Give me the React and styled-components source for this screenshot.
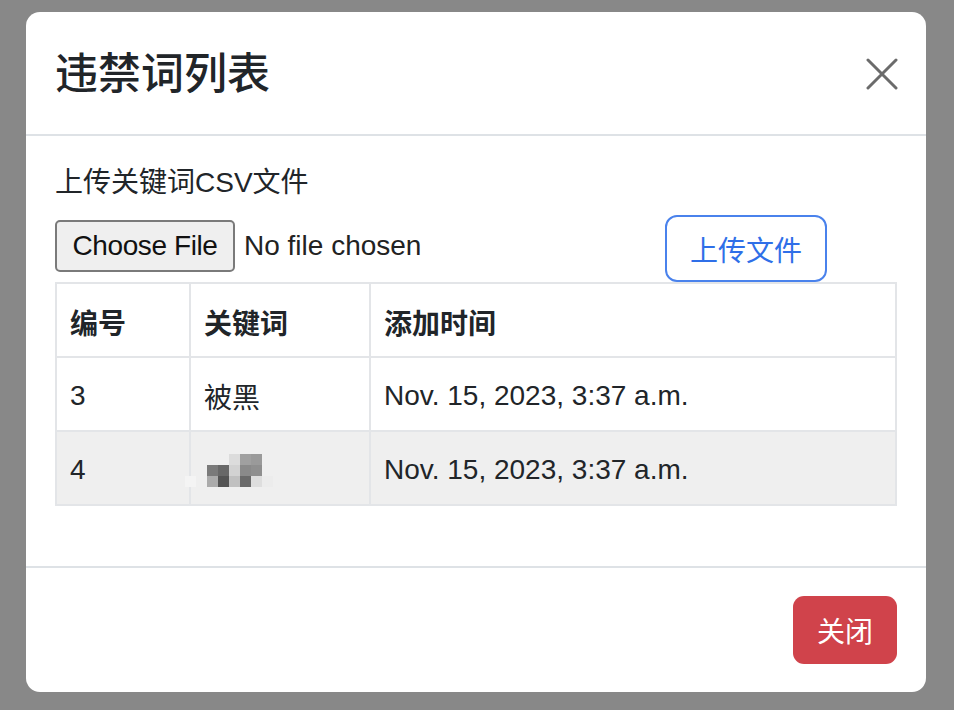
import React from "react";
import styled, { createGlobalStyle } from "styled-components";

const Global = createGlobalStyle`
  html, body { margin: 0; padding: 0; background: #888888; }
  body { font-family: "Liberation Sans", "Noto Sans CJK SC", Arial, sans-serif; color: #212529; }
  * { box-sizing: border-box; }
`;

const Page = styled.div`
  width: 954px;
  height: 710px;
  padding: 12px 28px 18px 26px;
`;

const Modal = styled.div`
  width: 900px;
  height: 680px;
  background: #fff;
  border-radius: 14px;
  display: flex;
  flex-direction: column;
  overflow: hidden;
`;

const Header = styled.div`
  height: 124px;
  flex: none;
  display: flex;
  align-items: center;
  justify-content: space-between;
  padding: 2px 28px 0 29px;
  border-bottom: 2px solid #dee2e6;
`;

const Title = styled.h5`
  margin: 0;
  font-size: 43px;
  font-weight: 500;
  line-height: 50px;
  color: #212529;
`;

const CloseX = styled.button`
  width: 32px;
  height: 32px;
  padding: 0;
  border: none;
  background: transparent;
  display: flex;
  align-items: center;
  justify-content: center;
`;

const Body = styled.div`
  flex: 1;
  padding: 32px 29px 30px 29px;
  display: flex;
  flex-direction: column;
`;

const Label = styled.div`
  font-size: 28px;
  line-height: 30px;
  color: #212529;
`;

const UploadRow = styled.div`
  display: flex;
  align-items: center;
  height: 67px;
  margin-top: 17px;
`;

const FileArea = styled.div`
  width: 610px;
  display: flex;
  align-items: center;
  gap: 9px;
  margin-top: -6px;
`;

const ChooseButton = styled.button`
  height: 52px;
  width: 180px;
  padding: 0 10px;
  font-family: "Liberation Sans", Arial, sans-serif;
  font-size: 28px;
  letter-spacing: -0.4px;
  color: #111;
  background: #efefef;
  border: 2px solid #7a7a7a;
  border-radius: 5px;
`;

const NoFile = styled.span`
  font-size: 28px;
  color: #222;
`;

const OutlineButton = styled.button`
  width: 162px;
  height: 67px;
  font-family: "Liberation Sans", "Noto Sans CJK SC", sans-serif;
  font-size: 28px;
  color: #2f6fe8;
  background: #fff;
  border: 2px solid #4a82ec;
  border-radius: 12px;
`;

const Table = styled.table`
  width: 842px;
  border-collapse: collapse;
  font-size: 28px;
  color: #212529;
`;

const Row = styled.tr`
  height: 74px;
  background: ${(p) => (p.$shaded ? "#efefef" : "#fff")};
`;

const Cell = styled.td`
  border: 2px solid #e3e5e8;
  padding: 3px 0 0 13px;
  font-weight: ${(p) => (p.$head ? 700 : 400)};
  width: ${(p) => p.$w || "auto"};
  vertical-align: middle;
`;

const Footer = styled.div`
  height: 126px;
  flex: none;
  border-top: 2px solid #dee2e6;
  display: flex;
  align-items: center;
  justify-content: flex-end;
  padding: 0 29px 0 0;
`;

const DangerButton = styled.button`
  width: 104px;
  height: 68px;
  border: none;
  border-radius: 11px;
  background: #d0434b;
  color: #fff;
  font-family: "Liberation Sans", "Noto Sans CJK SC", sans-serif;
  font-size: 28px;
`;

const Mosaic = () => {
  const cells = [
    [227, 452, "#dcdcdc"], [238, 452, "#a0a0a0"], [249, 452, "#9a9a9a"],
    [205, 463, "#7a7a7a"], [216, 463, "#686868"], [227, 463, "#d2d2d2"], [238, 463, "#8a8a8a"], [249, 463, "#8f8f8f"],
    [205, 474, "#ababab"], [216, 474, "#545454"], [227, 474, "#c0c0c0"], [238, 474, "#6a6a6a"], [249, 474, "#dedede"], [260, 474, "#ececec"],
    [183, 474, "#f4f4f4"],
  ];
  return (
    <svg width="90" height="36" viewBox="183 452 90 36" style={{ display: "block" }}>
      {cells.map(([x, y, c], i) => (
        <rect key={i} x={x} y={y} width="11" height="11" fill={c} />
      ))}
    </svg>
  );
};

const MosaicWrap = styled.div`
  margin-left: -19px;
  margin-top: 4px;
`;

export default function App() {
  return (
    <>
      <Global />
      <Page>
        <Modal>
          <Header>
            <Title>违禁词列表</Title>
            <CloseX aria-label="close">
              <svg width="32" height="32" viewBox="0 0 32 32">
                <path d="M2 2 L30 30 M30 2 L2 30" stroke="#6b6b6b" strokeWidth="3" strokeLinecap="round" />
              </svg>
            </CloseX>
          </Header>
          <Body>
            <Label>上传关键词CSV文件</Label>
            <UploadRow>
              <FileArea>
                <ChooseButton>Choose File</ChooseButton>
                <NoFile>No file chosen</NoFile>
              </FileArea>
              <OutlineButton>上传文件</OutlineButton>
            </UploadRow>
            <Table>
              <tbody>
                <Row>
                  <Cell $head $w="134px">编号</Cell>
                  <Cell $head $w="180px">关键词</Cell>
                  <Cell $head>添加时间</Cell>
                </Row>
                <Row>
                  <Cell>3</Cell>
                  <Cell>被黑</Cell>
                  <Cell>Nov. 15, 2023, 3:37 a.m.</Cell>
                </Row>
                <Row $shaded>
                  <Cell>4</Cell>
                  <Cell>
                    <MosaicWrap>
                      <Mosaic />
                    </MosaicWrap>
                  </Cell>
                  <Cell>Nov. 15, 2023, 3:37 a.m.</Cell>
                </Row>
              </tbody>
            </Table>
          </Body>
          <Footer>
            <DangerButton>关闭</DangerButton>
          </Footer>
        </Modal>
      </Page>
    </>
  );
}
